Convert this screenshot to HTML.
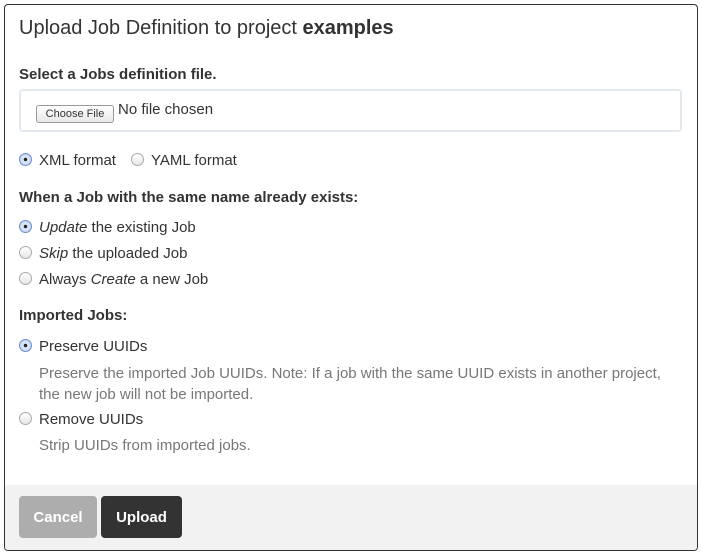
<!DOCTYPE html>
<html><head><meta charset="utf-8"><style>
body{margin:0;width:702px;height:554px;background:#fff;font-family:"Liberation Sans",Arial,sans-serif;color:#333;position:relative;overflow:hidden}
.panel{position:absolute;left:4px;top:4px;width:692px;height:545px;border:1px solid #333;border-radius:4px;overflow:hidden}
.t{position:absolute;white-space:nowrap;font-size:15px;line-height:16px;padding-top:1px}
.b{font-weight:bold}
.r{position:absolute;width:11px;height:11px;border:1px solid #aaa;border-radius:50%;background:linear-gradient(#fff,#e6e6e6)}
.r.on{border-color:#6a8fcf;background:radial-gradient(circle,#222 0 1.5px,#dfe9fb 2px,#b9cdf1 100%)}
.g{color:#777}
.foot{position:absolute;left:0;top:480px;width:692px;height:65px;background:#f2f2f2}
.btn{position:absolute;top:11px;height:42px;border-radius:4px;color:#fff;font-weight:bold;font-size:15px;line-height:44px;text-align:center}
</style></head><body>
<div class="panel">
<div class="t" style="left:14px;top:12px;font-size:20px;line-height:20px">Upload Job Definition to project <b>examples</b></div>
<div class="t b" style="left:14px;top:61px">Select a Jobs definition file.</div>
<div style="position:absolute;left:14px;top:84px;width:659px;height:39px;border:2px solid #e3e8f0;border-radius:4px"></div>
<div style="position:absolute;left:31px;top:100px;width:76px;height:16px;border:1px solid #999;border-radius:3px;background:linear-gradient(#fff,#e8e8e8);font-size:11px;line-height:16px;text-align:center">Choose File</div>
<div class="t" style="left:113px;top:96px">No file chosen</div>
<div class="r on" style="left:14px;top:148px"></div>
<div class="t" style="left:34px;top:147px">XML format</div>
<div class="r" style="left:126px;top:148px"></div>
<div class="t" style="left:146px;top:147px">YAML format</div>
<div class="t b" style="left:14px;top:184px">When a Job with the same name already exists:</div>
<div class="r on" style="left:14px;top:215px"></div>
<div class="t" style="left:34px;top:214px"><i>Update</i> the existing Job</div>
<div class="r" style="left:14px;top:241px"></div>
<div class="t" style="left:34px;top:240px"><i>Skip</i> the uploaded Job</div>
<div class="r" style="left:14px;top:267px"></div>
<div class="t" style="left:34px;top:266px">Always <i>Create</i> a new Job</div>
<div class="t b" style="left:14px;top:302px">Imported Jobs:</div>
<div class="r on" style="left:14px;top:334px"></div>
<div class="t" style="left:34px;top:333px">Preserve UUIDs</div>
<div class="t g" style="left:34px;top:357px;line-height:21px">Preserve the imported Job UUIDs. Note: If a job with the same UUID exists in another project,<br>the new job will not be imported.</div>
<div class="r" style="left:14px;top:407px"></div>
<div class="t" style="left:34px;top:406px">Remove UUIDs</div>
<div class="t g" style="left:34px;top:432px">Strip UUIDs from imported jobs.</div>
<div class="foot">
<div class="btn" style="left:14px;width:78px;background:#adadad">Cancel</div>
<div class="btn" style="left:96px;width:81px;background:#333">Upload</div>
</div>
</div>
</body></html>
